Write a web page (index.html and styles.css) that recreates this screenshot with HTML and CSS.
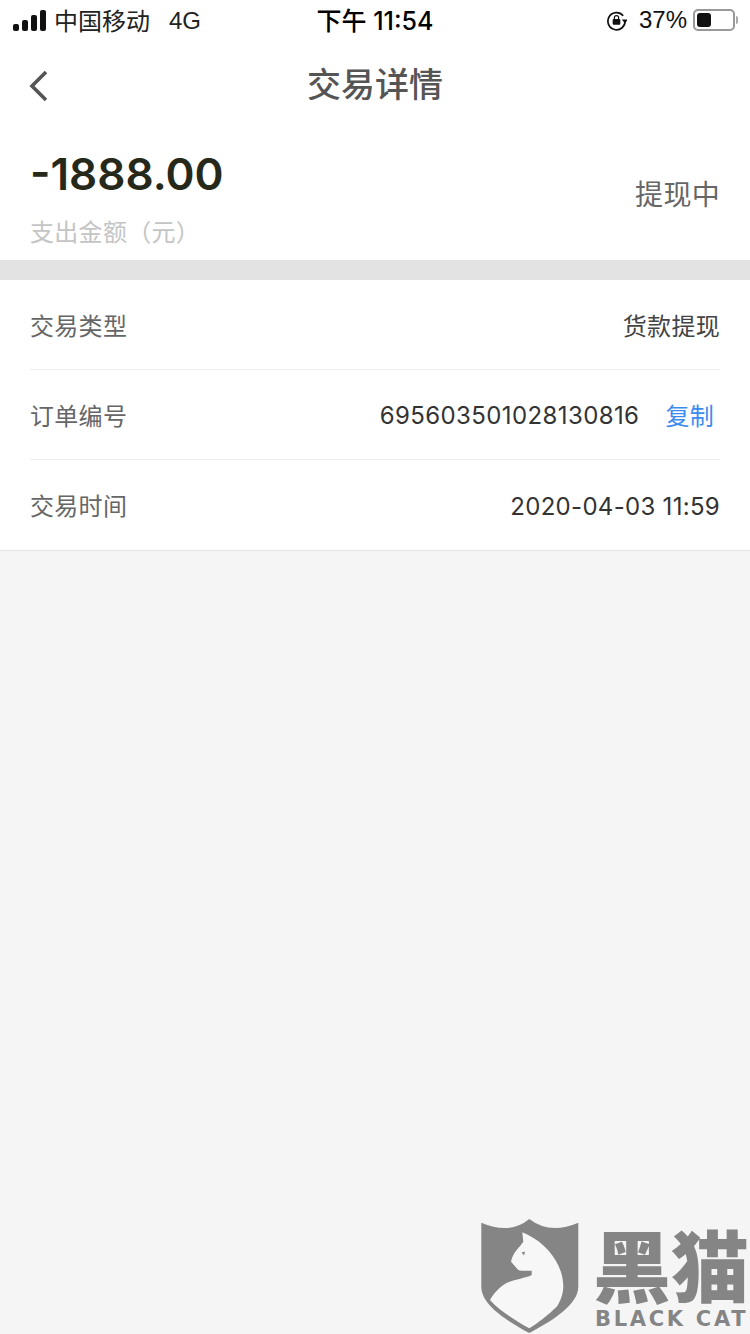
FILE: index.html
```html
<!DOCTYPE html>
<html lang="zh-CN">
<head>
    <meta charset="UTF-8">
    <meta name="viewport" content="width=device-width, initial-scale=1.0">
    <title>交易详情</title>
    <link rel="stylesheet" href="styles.css">
</head>
<body>
    <div class="status-bar">
        <div class="status-left">
            <div class="signal">
                <span class="signal-bar bar-1"></span>
                <span class="signal-bar bar-2"></span>
                <span class="signal-bar bar-3"></span>
                <span class="signal-bar bar-4"></span>
            </div>
            <span class="carrier">中国移动</span>
            <span class="network">4G</span>
        </div>
        <div class="status-time">下午 11:54</div>
        <div class="status-right">
            <svg class="lock-icon" width="21" height="21" viewBox="0 0 22 22">
                <path d="M18 6A9 9 0 1 0 20 11" fill="none" stroke="#111" stroke-width="1.8"/>
                <path d="M16.5 10h6.5l-3.2 4z" fill="#111"/>
                <rect x="7" y="9.5" width="8" height="6" rx="1" fill="#111"/>
                <path d="M8.8 9.5V8a2.2 2.2 0 0 1 4.4 0v1.5" fill="none" stroke="#111" stroke-width="1.3"/>
            </svg>
            <span class="battery-text">37%</span>
            <div class="battery">
                <div class="battery-level"></div>
            </div>
            <span class="battery-cap"></span>
        </div>
    </div>

    <div class="nav-bar">
        <svg class="back-icon" width="22" height="32" viewBox="0 0 22 32">
            <path d="M18 2L4 16l14 14" fill="none" stroke="#555" stroke-width="3.6"/>
        </svg>
        <h1 class="nav-title">交易详情</h1>
    </div>

    <div class="summary">
        <div class="summary-left">
            <div class="amount">-1888.00</div>
            <div class="amount-label">支出金额（元）</div>
        </div>
        <div class="summary-status">提现中</div>
    </div>

    <div class="details">
        <div class="detail-row">
            <span class="detail-label">交易类型</span>
            <span class="detail-value">货款提现</span>
        </div>
        <div class="detail-row">
            <span class="detail-label">订单编号</span>
            <span class="detail-value">
                <span class="number order-number">695603501028130816</span>
                <a class="copy-link">复制</a>
            </span>
        </div>
        <div class="detail-row">
            <span class="detail-label">交易时间</span>
            <span class="detail-value number trade-time">2020-04-03 11:59</span>
        </div>
    </div>

    <div class="watermark">
        <svg class="shield" width="100" height="116" viewBox="0 0 100 116">
            <path d="M1.3 3.7Q30 16 49.3 0Q70 16 98.3 3.7V68C98 86 72 102 49.3 114C27 102 1.5 86 1.3 68Z" fill="#868586"/>
            <path d="M42.3 13.3L48.3 16C68 26 83.3 46 83.3 67.7C83 76 80 83 76.7 87.7C68 96 58 104 49.3 109.3C36 102 20 92 10 81C14 74 18 70 23.3 66C32 60 44 60 51.7 56L51.7 51.7C46 52 42 52 38.3 51L31 42.7C32 38 34 34 36.7 31C39 28 42 25 43.3 22.7Z" fill="#f7f7f7"/>
            <path d="M41.5 33.5L45 32.5L44 36.5Z" fill="#868586"/>
        </svg>
        <div class="watermark-text">
            <div class="watermark-cn">黑猫</div>
            <div class="watermark-en">BLACK CAT</div>
        </div>
    </div>
</body>
</html>
```

FILE: styles.css
```css
body {
    font-family: "Liberation Sans", "Noto Sans CJK SC", sans-serif;
    background-color: #f5f5f5;
    color: #333;
    margin: 0;
    padding: 0;
    width: 750px;
    height: 1334px;
    position: relative;
    overflow: hidden;
}
.status-bar {
    display: grid;
    grid-template-columns: 1fr auto 1fr;
    align-items: center;
    height: 40px;
    background-color: #fff;
    color: #111;
    font-size: 24px;
}
.status-left {
    display: flex;
    align-items: center;
    padding-left: 13px;
}
.signal {
    display: flex;
    align-items: flex-end;
    gap: 3px;
    height: 21px;
    margin-right: 9px;
}
.signal-bar {
    width: 6px;
    background-color: #111;
    border-radius: 2px;
}
.bar-1 { height: 7px; }
.bar-2 { height: 11px; }
.bar-3 { height: 16px; }
.bar-4 { height: 21px; }
.carrier {
    color: #222;
    margin-left: -1px;
    margin-right: 19px;
    padding-bottom: 2px;
}
.network {
    color: #222;
    padding-top: 2px;
}
.status-time {
    font-weight: 500;
    font-family: "Inter", "Noto Sans CJK SC", sans-serif;
    font-size: 25px;
    color: #000;
    padding-bottom: 2px;
}
.status-right {
    display: flex;
    align-items: center;
    justify-content: flex-end;
    padding-right: 12px;
}
.lock-icon {
    margin-right: 12px;
}
.battery-text {
    margin-right: 6px;
}
.battery {
    width: 34px;
    height: 14px;
    border: 2px solid #999;
    border-radius: 5px;
    padding: 2px;
    box-sizing: content-box;
}
.battery-level {
    width: 14px;
    height: 14px;
    background-color: #111;
    border-radius: 3px;
}
.battery-cap {
    width: 2px;
    height: 8px;
    margin-left: 1px;
    background-color: #aaa;
    border-radius: 0 2px 2px 0;
}
.nav-bar {
    display: flex;
    align-items: center;
    justify-content: center;
    height: 90px;
    background-color: #fff;
    position: relative;
}
.back-icon {
    position: absolute;
    left: 28px;
    top: 30px;
}
.nav-title {
    margin: 0 0 6px;
    font-size: 34px;
    font-weight: 500;
    color: #555;
    letter-spacing: 0;
}
.summary {
    display: flex;
    justify-content: space-between;
    align-items: center;
    height: 130px;
    padding: 0 30px;
    background-color: #fff;
    border-bottom: 20px solid #e3e3e3;
}
.summary-left {
    align-self: flex-start;
    padding-top: 16px;
}
.amount {
    font-family: "Inter", sans-serif;
    font-size: 44px;
    font-weight: 600;
    line-height: 56px;
    color: #26281a;
}
.amount-label {
    font-size: 24px;
    line-height: 34px;
    margin-top: 12px;
    color: #c4c4c4;
    font-family: "Noto Sans CJK SC", sans-serif;
    letter-spacing: 0.3px;
}
.summary-status {
    font-family: "Noto Sans CJK SC", sans-serif;
    font-size: 28px;
    letter-spacing: 0.3px;
    color: #666;
    margin-bottom: 4px;
}
.details {
    background-color: #fff;
    padding: 0 30px;
    border-bottom: 1px solid #e4e4e4;
}
.detail-row {
    display: flex;
    justify-content: space-between;
    align-items: center;
    height: 89px;
    border-bottom: 1px solid #eee;
    font-size: 24px;
    letter-spacing: 0.3px;
    font-family: "Noto Sans CJK SC", sans-serif;
}
.detail-row:last-child {
    height: 90px;
    border-bottom: none;
}
.detail-label {
    color: #666;
    padding-bottom: 1px;
}
.detail-value {
    color: #444;
    display: flex;
    align-items: center;
}
.number {
    font-family: "Inter", sans-serif;
    color: #333;
    padding-top: 2px;
}
.order-number {
    letter-spacing: 0.4px;
}
.trade-time {
    letter-spacing: 0.3px;
}
.copy-link {
    color: #3c8cf0;
    margin-left: 26px;
    margin-right: 6px;
}
.watermark {
    position: absolute;
    left: 480px;
    top: 1219px;
    display: flex;
    gap: 15px;
}
.watermark-text {
    color: #868586;
    font-weight: 700;
}
.watermark-cn {
    font-family: "Noto Sans CJK SC", sans-serif;
    font-weight: 900;
    font-size: 78px;
    line-height: 70px;
    margin-top: 9px;
    margin-left: -2px;
}
.watermark-en {
    font-family: "DejaVu Sans", sans-serif;
    font-size: 21px;
    line-height: 20px;
    letter-spacing: 2.7px;
    margin-top: 11px;
    white-space: nowrap;
}
```
